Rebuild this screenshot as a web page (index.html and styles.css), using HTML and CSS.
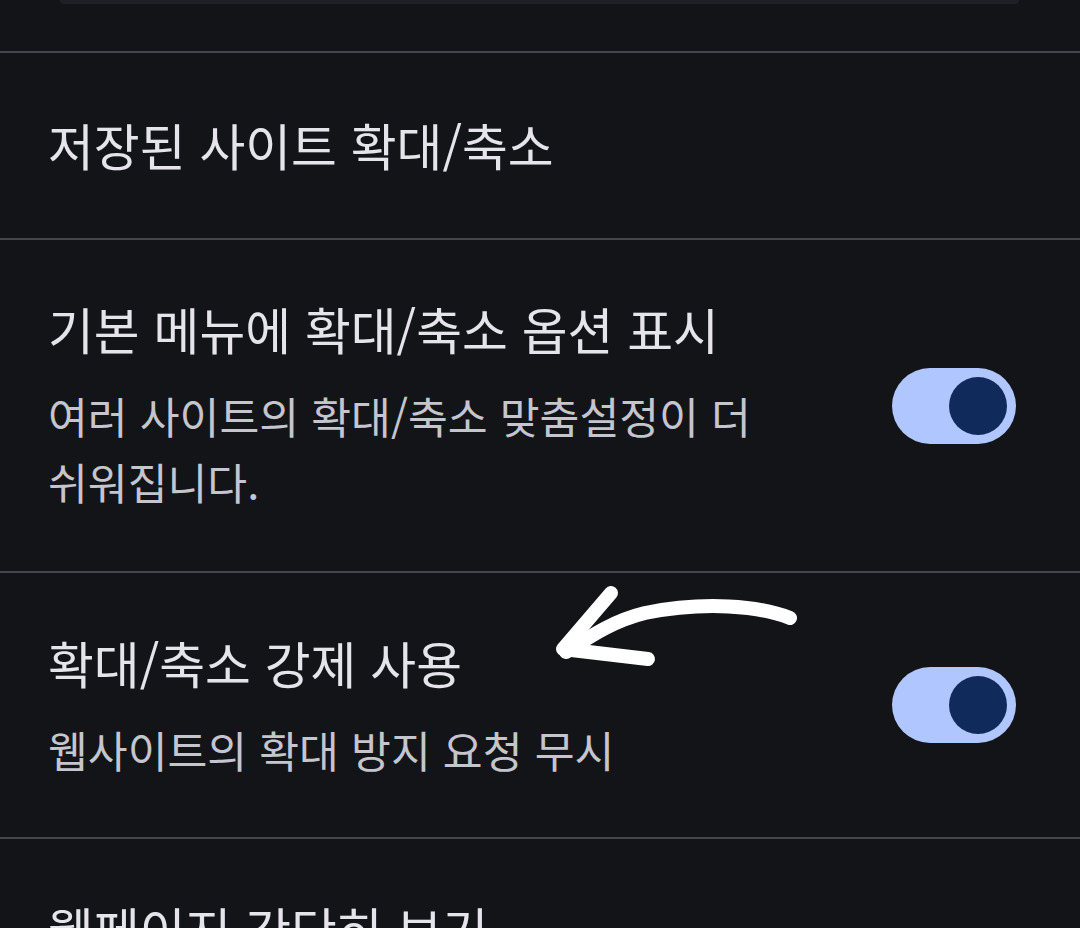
FILE: index.html
```html
<!DOCTYPE html>
<html lang="ko">
<head>
<meta charset="utf-8">
<link rel="stylesheet" href="styles.css">
</head>
<body>
<div class="page">
  <div class="search-stub"></div>
  <div class="row row-simple">
    <div class="row-text">
      <div class="title">저장된 사이트 확대/축소</div>
    </div>
  </div>
  <div class="row row-menu">
    <div class="row-text">
      <div class="title">기본 메뉴에 확대/축소 옵션 표시</div>
      <div class="subtitle">여러 사이트의 확대/축소 맞춤설정이 더<br>쉬워집니다.</div>
    </div>
    <div class="toggle"><div class="thumb"></div></div>
  </div>
  <div class="row row-force">
    <div class="row-text">
      <div class="title">확대/축소 강제 사용</div>
      <div class="subtitle">웹사이트의 확대 방지 요청 무시</div>
    </div>
    <div class="toggle"><div class="thumb"></div></div>
  </div>
  <div class="row row-last">
    <div class="row-text">
      <div class="title">웹페이지 간단히 보기</div>
    </div>
  </div>
  <svg class="arrow" width="1080" height="928" viewBox="0 0 1080 928">
    <path d="M790 618 C 760 606, 705 601, 645 613 C 612 621, 588 638, 566 652" />
    <path d="M611 593 L 563 649 L 648 659" />
  </svg>
</div>
</body>
</html>
```

FILE: styles.css
```css
* { box-sizing: border-box; }
html, body {
  margin: 0;
  padding: 0;
  background: #131418;
}
body {
  font-family: "Roboto", "Noto Sans CJK KR", sans-serif;
  width: 1080px;
  height: 928px;
  overflow: hidden;
}
.page {
  position: relative;
  width: 1080px;
  height: 928px;
  overflow: hidden;
}
.search-stub {
  height: 4px;
  margin: 0 61px 0 60px;
  background: #1f2025;
  border-radius: 0 0 14px 14px;
}
.row {
  display: flex;
  align-items: center;
  border-top: 2px solid #45464d;
  padding: 0 64px 0 48px;
}
.search-stub + .row { margin-top: 47px; }
.row-text {
  flex: 1;
  display: flex;
  flex-direction: column;
}
.title {
  font-family: "Noto Sans CJK KR", sans-serif;
  font-size: 49.8px;
  line-height: 60px;
  color: #e5e4ea;
  white-space: nowrap;
}
.subtitle {
  font-family: "Noto Sans CJK KR", sans-serif;
  font-size: 43.3px;
  line-height: 66px;
  color: #c4c5cd;
  margin-top: 24px;
  white-space: nowrap;
}
.row-simple { height: 187px; padding-bottom: 4px; }
.row-menu { height: 333px; }
.row-force { height: 266px; padding-top: 4px; }
.row-last { height: 200px; align-items: flex-start; padding-top: 59px; }
.toggle {
  width: 124px;
  height: 76px;
  border-radius: 38px;
  background: #b0c6ff;
  display: flex;
  align-items: center;
  justify-content: flex-end;
  padding-right: 9px;
  flex-shrink: 0;
}
.row-force .toggle { margin-top: -4px; }
.thumb {
  width: 58px;
  height: 58px;
  border-radius: 50%;
  background: #102b5b;
}
.arrow {
  position: absolute;
  left: 0;
  top: 0;
  pointer-events: none;
}
.arrow path {
  fill: none;
  stroke: #ffffff;
  stroke-width: 14;
  stroke-linecap: round;
  stroke-linejoin: round;
}
```
